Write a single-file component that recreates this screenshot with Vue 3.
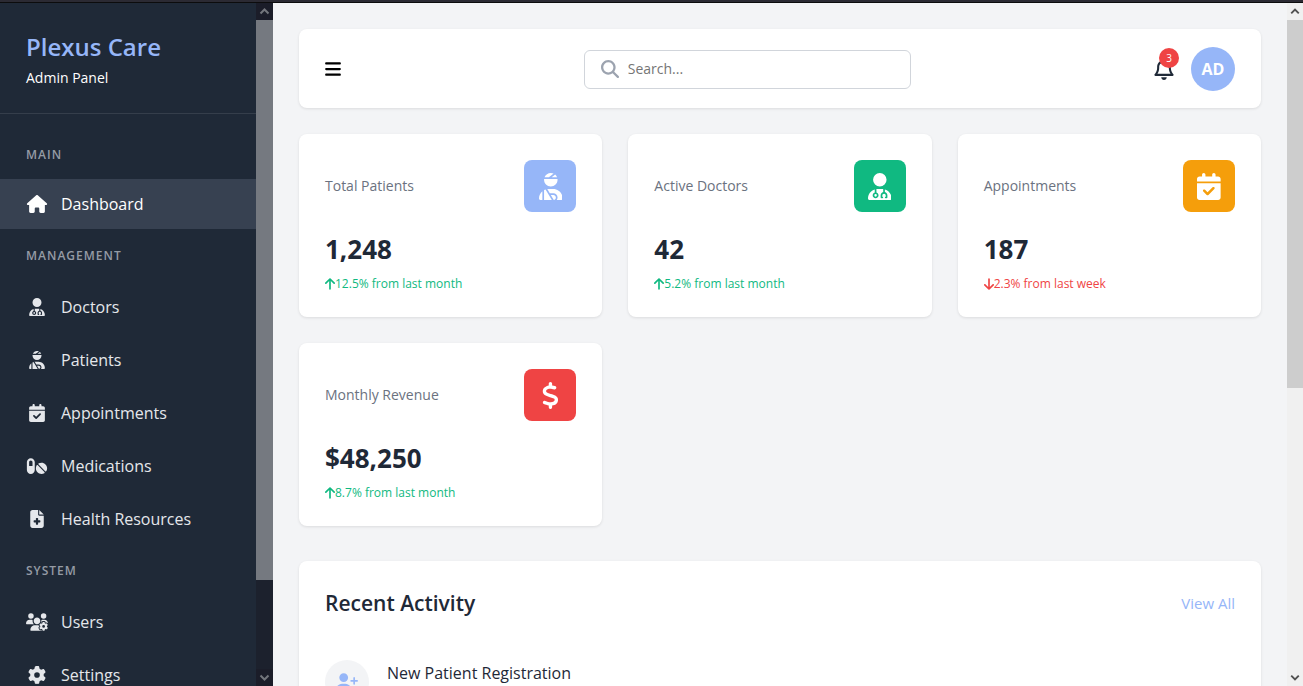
<script setup>
import { ref } from 'vue'

const icons = {
  house: { w: 576, d: 'M575.8 255.5c0 18-15 32.1-32 32.1l-32 0 .7 160.2c0 2.7-.2 5.4-.5 8.1l0 16.2c0 22.1-17.9 40-40 40l-16 0c-1.1 0-2.2 0-3.3-.1c-1.4 .1-2.8 .1-4.2 .1L416 512l-24 0c-22.1 0-40-17.9-40-40l0-24 0-64c0-17.7-14.3-32-32-32l-64 0c-17.7 0-32 14.3-32 32l0 64 0 24c0 22.1-17.9 40-40 40l-24 0-31.9 0c-1.5 0-3-.1-4.5-.2c-1.2 .1-2.4 .2-3.6 .2l-16 0c-22.1 0-40-17.9-40-40l0-112c0-.9 0-1.9 .1-2.8l0-69.7-32 0c-18 0-32-14-32-32.1c0-9 3-17 10-24L266.4 8c7-7 15-8 22-8s15 2 21 7L564.8 231.5c8 7 12 15 11 24z' },
  doctor: { w: 448, d: 'M224 256A128 128 0 1 0 224 0a128 128 0 1 0 0 256zm-96 55.2C54 332.9 0 401.3 0 482.3C0 498.7 13.3 512 29.7 512l388.6 0c16.4 0 29.7-13.3 29.7-29.7c0-81-54-149.4-128-171.1l0 50.8c27.6 7.1 48 32.2 48 62l0 40c0 8.8-7.2 16-16 16l-16 0c-8.8 0-16-7.2-16-16s7.2-16 16-16l0-24c0-17.7-14.3-32-32-32s-32 14.3-32 32l0 24c8.8 0 16 7.2 16 16s-7.2 16-16 16l-16 0c-8.8 0-16-7.2-16-16l0-40c0-29.8 20.4-54.9 48-62l0-57.1c-6-.6-12.1-.9-18.3-.9l-91.4 0c-6.2 0-12.3 .3-18.3 .9l0 65.4c23.1 6.9 40 28.3 40 53.7c0 30.9-25.1 56-56 56s-56-25.1-56-56c0-25.4 16.9-46.8 40-53.7l0-59.1zM144 448a24 24 0 1 0 0-48 24 24 0 1 0 0 48z' },
  patient: { w: 448, d: 'M240 80l102.7 0c-7.9-19.5-20.4-36.5-36.2-49.9L240 80zm37.7-68.2C261.3 4.2 243.2 0 224 0c-53.7 0-99.7 33.1-118.7 80l81.4 0 91-68.2zM224 256c70.7 0 128-57.3 128-128c0-5.4-.3-10.8-1-16L97 112c-.7 5.2-1 10.6-1 16c0 70.7 57.3 128 128 128zM124 312.4c-9.7 3.1-19.1 7-28 11.7L96 512l147.7 0L181.5 408.2 124 312.4zm33-7.2L204.3 384l67.7 0c44.2 0 80 35.8 80 80c0 18-6 34.6-16 48l82.3 0c16.4 0 29.7-13.3 29.7-29.7C448 383.8 368.2 304 269.7 304l-91.4 0c-7.2 0-14.3 .4-21.3 1.3zM0 482.3C0 498.7 13.3 512 29.7 512L64 512l0-166.6C24.9 378.1 0 427.3 0 482.3zM320 464c0-26.5-21.5-48-48-48l-48.5 0 57.1 95.2C303 507.2 320 487.6 320 464z' },
  calendar: { w: 448, d: 'M128 0c17.7 0 32 14.3 32 32l0 32 128 0 0-32c0-17.7 14.3-32 32-32s32 14.3 32 32l0 32 48 0c26.5 0 48 21.5 48 48l0 48L0 160l0-48C0 85.5 21.5 64 48 64l48 0 0-32c0-17.7 14.3-32 32-32zM0 192l448 0 0 272c0 26.5-21.5 48-48 48L48 512c-26.5 0-48-21.5-48-48L0 192zM329 305c9.4-9.4 9.4-24.6 0-33.9s-24.6-9.4-33.9 0l-95 95-47-47c-9.4-9.4-24.6-9.4-33.9 0s-9.4 24.6 0 33.9l64 64c9.4 9.4 24.6 9.4 33.9 0L329 305z' },
  pills: { w: 576, d: 'M112 96c-26.5 0-48 21.5-48 48l0 112 96 0 0-112c0-26.5-21.5-48-48-48zM0 144C0 82.1 50.1 32 112 32s112 50.1 112 112l0 224c0 61.9-50.1 112-112 112S0 429.9 0 368L0 144zM554.9 399.4c-7.1 12.3-23.7 13.1-33.8 3.1L333.5 214.9c-10-10-9.3-26.7 3.1-33.8C360 167.7 387.1 160 416 160c88.4 0 160 71.6 160 160c0 28.9-7.7 56-21.1 79.4zm-59.5 59.5C472 472.3 444.9 480 416 480c-88.4 0-160-71.6-160-160c0-28.9 7.7-56 21.1-79.4c7.1-12.3 23.7-13.1 33.8-3.1L498.5 425.1c10 10 9.3 26.7-3.1 33.8z' },
  file: { w: 384, d: 'M64 0C28.7 0 0 28.7 0 64L0 448c0 35.3 28.7 64 64 64l256 0c35.3 0 64-28.7 64-64l0-288-128 0c-17.7 0-32-14.3-32-32L224 0 64 0zM256 0l0 128 128 0L256 0zM160 240c0-8.8 7.2-16 16-16l32 0c8.8 0 16 7.2 16 16l0 48 48 0c8.8 0 16 7.2 16 16l0 32c0 8.8-7.2 16-16 16l-48 0 0 48c0 8.8-7.2 16-16 16l-32 0c-8.8 0-16-7.2-16-16l0-48-48 0c-8.8 0-16-7.2-16-16l0-32c0-8.8 7.2-16 16-16l48 0 0-48z' },
  users: { w: 640, d: 'M144 160A80 80 0 1 0 144 0a80 80 0 1 0 0 160zm368 0A80 80 0 1 0 512 0a80 80 0 1 0 0 160zM0 298.7C0 310.4 9.6 320 21.3 320l213.3 0c.2 0 .4 0 .7 0c-26.6-23.5-43.3-57.8-43.3-96c0-7.6 .7-15 1.9-22.3c-13.6-6.3-28.7-9.7-44.6-9.7l-42.7 0C47.8 192 0 239.8 0 298.7zM320 320c24 0 45.9-8.8 62.7-23.3c2.5-3.7 5.2-7.3 8-10.7c2.7-3.3 5.7-6.1 9-8.3C410 262.3 416 243.9 416 224c0-53-43-96-96-96s-96 43-96 96s43 96 96 96zm65.4 60.2c-10.3-5.9-18.1-16.2-20.8-28.2l-103.2 0C187.7 352 128 411.7 128 485.3c0 14.7 11.9 26.7 26.7 26.7l300.6 0c-2.1-5.2-3.2-10.9-3.2-16.4l0-3c-1.3-.7-2.7-1.5-4-2.3l-2.6 1.5c-16.8 9.7-40.5 8-54.7-9.7c-4.5-5.6-8.6-11.5-12.4-17.6l-.1-.2-.1-.2-2.4-4.1-.1-.2-.1-.2c-3.4-6.2-6.4-12.6-9-19.3c-8.2-21.2 2.2-42.6 19-52.3l2.7-1.5c0-.8 0-1.5 0-2.3s0-1.5 0-2.3l-2.7-1.5zM533.3 192l-42.7 0c-15.9 0-31 3.5-44.6 9.7c1.3 7.2 1.9 14.7 1.9 22.3c0 17.4-3.5 33.9-9.7 49c2.5 .9 4.9 2 7.1 3.3l2.6 1.5c1.3-.8 2.6-1.6 4-2.3l0-3c0-19.4 13.3-39.1 35.8-42.6c7.9-1.2 16-1.9 24.2-1.9s16.3 .6 24.2 1.9c22.5 3.5 35.8 23.2 35.8 42.6l0 3c1.3 .7 2.7 1.5 4 2.3l2.6-1.5c16.8-9.7 40.5-8 54.7 9.7c2.3 2.8 4.5 5.8 6.6 8.7c-2.1-57.1-49-102.7-106.6-102.7zm91.3 163.9c6.3-3.6 9.5-11.1 6.8-18c-2.1-5.5-4.6-10.8-7.4-15.9l-2.3-4c-3.1-5.1-6.5-9.9-10.2-14.5c-4.6-5.7-12.7-6.7-19-3l-2.9 1.7c-9.2 5.3-20.4 4-29.6-1.3s-16.1-14.5-16.1-25.1l0-3.4c0-7.3-4.9-13.8-12.1-14.9c-6.5-1-13.1-1.5-19.9-1.5s-13.4 .5-19.9 1.5c-7.2 1.1-12.1 7.6-12.1 14.9l0 3.4c0 10.6-6.9 19.8-16.1 25.1s-20.4 6.6-29.6 1.3l-2.9-1.7c-6.3-3.6-14.4-2.6-19 3c-3.7 4.6-7.1 9.5-10.2 14.6l-2.3 3.9c-2.8 5.1-5.3 10.4-7.4 15.9c-2.6 6.8 .5 14.3 6.8 17.9l2.9 1.7c9.2 5.3 13.7 15.8 13.7 26.4s-4.5 21.1-13.7 26.4l-3 1.7c-6.3 3.6-9.5 11.1-6.8 17.9c2.1 5.5 4.6 10.7 7.4 15.8l2.4 4.1c3 5.1 6.4 9.9 10.1 14.5c4.6 5.7 12.7 6.7 19 3l2.9-1.7c9.2-5.3 20.4-4 29.6 1.3s16.1 14.5 16.1 25.1l0 3.4c0 7.3 4.9 13.8 12.1 14.9c6.5 1 13.1 1.5 19.9 1.5s13.4-.5 19.9-1.5c7.2-1.1 12.1-7.6 12.1-14.9l0-3.4c0-10.6 6.9-19.8 16.1-25.1s20.4-6.6 29.6-1.3l2.9 1.7c6.3 3.6 14.4 2.6 19-3c3.7-4.6 7.1-9.4 10.1-14.5l2.4-4.2c2.8-5.1 5.3-10.3 7.4-15.8c2.6-6.8-.5-14.3-6.8-17.9l-3-1.7c-9.2-5.3-13.7-15.8-13.7-26.4s4.5-21.1 13.7-26.4l3-1.7zM472 384a40 40 0 1 1 80 0 40 40 0 1 1 -80 0z' },
  gear: { w: 512, d: 'M495.9 166.6c3.2 8.7 .5 18.4-6.4 24.6l-43.3 39.4c1.1 8.3 1.7 16.8 1.7 25.4s-.6 17.1-1.7 25.4l43.3 39.4c6.9 6.2 9.6 15.9 6.4 24.6c-4.4 11.9-9.7 23.3-15.8 34.3l-4.7 8.1c-6.6 11-14 21.4-22.1 31.2c-5.9 7.2-15.7 9.6-24.5 6.8l-55.7-17.7c-13.4 10.3-28.2 18.9-44 25.4l-12.5 57.1c-2 9.1-9 16.3-18.2 17.8c-13.8 2.3-28 3.5-42.5 3.5s-28.7-1.2-42.5-3.5c-9.2-1.5-16.2-8.7-18.2-17.8l-12.5-57.1c-15.8-6.5-30.6-15.1-44-25.4L83.1 425.9c-8.8 2.8-18.6 .3-24.5-6.8c-8.1-9.8-15.5-20.2-22.1-31.2l-4.7-8.1c-6.1-11-11.4-22.4-15.8-34.3c-3.2-8.7-.5-18.4 6.4-24.6l43.3-39.4C64.6 273.1 64 264.6 64 256s.6-17.1 1.7-25.4L22.4 191.2c-6.9-6.2-9.6-15.9-6.4-24.6c4.4-11.9 9.7-23.3 15.8-34.3l4.7-8.1c6.6-11 14-21.4 22.1-31.2c5.9-7.2 15.7-9.6 24.5-6.8l55.7 17.7c13.4-10.3 28.2-18.9 44-25.4l12.5-57.1c2-9.1 9-16.3 18.2-17.8C227.3 1.2 241.5 0 256 0s28.7 1.2 42.5 3.5c9.2 1.5 16.2 8.7 18.2 17.8l12.5 57.1c15.8 6.5 30.6 15.1 44 25.4l55.7-17.7c8.8-2.8 18.6-.3 24.5 6.8c8.1 9.8 15.5 20.2 22.1 31.2l4.7 8.1c6.1 11 11.4 22.4 15.8 34.3zM256 336a80 80 0 1 0 0-160 80 80 0 1 0 0 160z' },
  dollar: { w: 320, d: 'M160 0c17.7 0 32 14.3 32 32l0 35.7c1.6 .2 3.1 .4 4.7 .7c.4 .1 .7 .1 1.1 .2l48 8.8c17.4 3.2 28.9 19.9 25.7 37.2s-19.9 28.9-37.2 25.7l-47.5-8.7c-31.3-4.6-58.9-1.5-78.3 6.2s-27.2 18.3-29 28.1c-2 10.7-.5 16.7 1.2 20.4c1.8 3.9 5.5 8.3 12.8 13.2c16.3 10.7 41.3 17.7 73.7 26.3l2.9 .8c28.6 7.6 63.6 16.8 89.6 33.8c14.2 9.3 27.6 21.9 35.9 39.5c8.5 17.9 10.3 37.9 6.4 59.2c-6.9 38-33.1 63.4-65.6 76.7c-13.7 5.6-28.6 9.2-44.4 11l0 33.4c0 17.7-14.3 32-32 32s-32-14.3-32-32l0-34.9c-.4-.1-.9-.1-1.3-.2l-.2 0s0 0 0 0c-24.4-3.8-64.5-14.3-91.5-26.3c-16.1-7.2-23.4-26.1-16.2-42.2s26.1-23.4 42.2-16.2c20.9 9.3 55.3 18.5 75.2 21.6c31.9 4.7 58.2 2 76-5.3c16.9-6.9 24.6-16.9 26.8-28.9c1.9-10.6 .4-16.7-1.3-20.4c-1.9-4-5.6-8.4-13-13.3c-16.4-10.7-41.5-17.7-74-26.3l-2.8-.7s0 0 0 0C119.4 279.3 84.4 270 58.4 253c-14.2-9.3-27.5-22-35.8-39.6c-8.4-17.9-10.1-37.9-6.1-59.2C23.7 116 52.3 91.2 84.8 78.3c13.3-5.3 27.9-8.9 43.2-11L128 32c0-17.7 14.3-32 32-32z' },
  up: { w: 384, d: 'M214.6 41.4c-12.5-12.5-32.8-12.5-45.3 0l-160 160c-12.5 12.5-12.5 32.8 0 45.3s32.8 12.5 45.3 0L160 141.2 160 448c0 17.7 14.3 32 32 32s32-14.3 32-32l0-306.7L329.4 246.6c12.5 12.5 32.8 12.5 45.3 0s12.5-32.8 0-45.3l-160-160z' },
  down: { w: 384, d: 'M169.4 470.6c12.5 12.5 32.8 12.5 45.3 0l160-160c12.5-12.5 12.5-32.8 0-45.3s-32.8-12.5-45.3 0L224 370.8 224 64c0-17.7-14.3-32-32-32s-32 14.3-32 32l0 306.7L54.6 265.4c-12.5-12.5-32.8-12.5-45.3 0s-12.5 32.8 0 45.3l160 160z' },
}

const sections = [
  { title: 'Main', links: [{ label: 'Dashboard', icon: 'house', active: true }] },
  {
    title: 'Management',
    links: [
      { label: 'Doctors', icon: 'doctor' },
      { label: 'Patients', icon: 'patient' },
      { label: 'Appointments', icon: 'calendar' },
      { label: 'Medications', icon: 'pills' },
      { label: 'Health Resources', icon: 'file' },
    ],
  },
  {
    title: 'System',
    links: [
      { label: 'Users', icon: 'users' },
      { label: 'Settings', icon: 'gear' },
    ],
  },
]

const stats = [
  { label: 'Total Patients', value: '1,248', trend: '12.5% from last month', dir: 'up', icon: 'patient', tone: 'blue' },
  { label: 'Active Doctors', value: '42', trend: '5.2% from last month', dir: 'up', icon: 'doctor', tone: 'green' },
  { label: 'Appointments', value: '187', trend: '2.3% from last week', dir: 'down', icon: 'calendar', tone: 'amber' },
  { label: 'Monthly Revenue', value: '$48,250', trend: '8.7% from last month', dir: 'up', icon: 'dollar', tone: 'red' },
]

const query = ref('')
const box = (name) => `0 0 ${icons[name].w} 512`
</script>

<template>
  <div class="page">
    <div class="window-edge"></div>
    <div class="shell">
      <aside class="sidebar">
        <div class="sidebar-body">
          <div class="brand">
            <h2>Plexus Care</h2>
            <p>Admin Panel</p>
          </div>
          <nav class="menu" aria-label="Primary">
            <section v-for="s in sections" :key="s.title" class="menu-section">
              <h3>{{ s.title }}</h3>
              <ul>
                <li v-for="l in s.links" :key="l.label">
                  <a href="#" :class="{ active: l.active }">
                    <svg class="menu-icon" :viewBox="box(l.icon)" aria-hidden="true"><path :d="icons[l.icon].d" /></svg>
                    <span>{{ l.label }}</span>
                  </a>
                </li>
              </ul>
            </section>
          </nav>
        </div>
        <div class="scrollbar dark" aria-hidden="true">
          <div class="arrow"><svg viewBox="0 0 17 17"><path d="M4.500 10.500l4-4 4 4" /></svg></div>
          <div class="track"><div class="thumb" :style="{ height: '86.3%' }"></div></div>
          <div class="arrow"><svg viewBox="0 0 17 17"><path d="M4.500 6.500l4 4 4-4" /></svg></div>
        </div>
      </aside>

      <main class="content">
        <header class="topbar card">
          <button class="toggle" type="button" aria-label="Toggle menu">
            <svg viewBox="0 0 448 512"><path d="M0 96C0 78.300 14.300 64 32 64l384 0c17.700 0 32 14.300 32 32s-14.300 32-32 32L32 128C14.300 128 0 113.700 0 96zM0 256c0-17.700 14.300-32 32-32l384 0c17.700 0 32 14.300 32 32s-14.300 32-32 32L32 288c-17.700 0-32-14.300-32-32zM448 416c0 17.700-14.300 32-32 32L32 448c-17.700 0-32-14.300-32-32s14.300-32 32-32l384 0c17.700 0 32 14.300 32 32z" /></svg>
          </button>
          <label class="search">
            <svg viewBox="0 0 512 512" aria-hidden="true"><path d="M416 208c0 45.900-14.900 88.300-40 122.700L502.600 457.400c12.500 12.500 12.500 32.800 0 45.300s-32.800 12.500-45.300 0L330.700 376c-34.400 25.200-76.800 40-122.700 40C93.100 416 0 322.900 0 208S93.100 0 208 0S416 93.100 416 208zM208 352a144 144 0 1 0 0-288 144 144 0 1 0 0 288z" /></svg>
            <input v-model="query" type="text" placeholder="Search..." aria-label="Search" />
          </label>
          <div class="user-tools">
            <button class="bell" type="button" aria-label="Notifications">
              <svg viewBox="0 0 448 512"><path d="M224 0c-17.700 0-32 14.300-32 32l0 19.200C119 66 64 130.600 64 208l0 25.400c0 45.400-15.500 89.500-43.800 124.900L5.300 377c-5.800 7.200-6.900 17.100-2.900 25.400S14.800 416 24 416l400 0c9.200 0 17.600-5.300 21.600-13.600s2.900-18.200-2.900-25.400l-14.900-18.600C399.500 322.900 384 278.800 384 233.400l0-25.400c0-77.400-55-142-128-156.800L256 32c0-17.700-14.300-32-32-32zm0 96c61.900 0 112 50.100 112 112l0 25.400c0 47.900 13.900 94.600 39.700 134.600L72.300 368C98.100 328 112 281.300 112 233.400l0-25.400c0-61.900 50.100-112 112-112zm64 352l-64 0-64 0c0 17 6.700 33.300 18.700 45.300s28.300 18.700 45.300 18.700s33.300-6.700 45.300-18.700s18.700-28.300 18.700-45.300z" /></svg>
              <span class="badge">3</span>
            </button>
            <div class="avatar">AD</div>
          </div>
        </header>

        <div class="stats">
          <article v-for="s in stats" :key="s.label" class="stat card">
            <div class="stat-head">
              <span class="stat-label">{{ s.label }}</span>
              <div class="stat-icon" :class="s.tone">
                <svg :viewBox="box(s.icon)" aria-hidden="true"><path :d="icons[s.icon].d" /></svg>
              </div>
            </div>
            <div class="stat-value">{{ s.value }}</div>
            <div class="trend" :class="s.dir">
              <svg :viewBox="box(s.dir)" aria-hidden="true"><path :d="icons[s.dir].d" /></svg>
              <span>{{ s.trend }}</span>
            </div>
          </article>
        </div>

        <section class="activity card">
          <div class="activity-head">
            <h2>Recent Activity</h2>
            <a href="#">View All</a>
          </div>
          <ul class="activity-list">
            <li>
              <div class="activity-icon">
                <svg viewBox="0 0 640 512" aria-hidden="true"><path d="M96 128a128 128 0 1 1 256 0A128 128 0 1 1 96 128zM0 482.300C0 383.800 79.800 304 178.300 304l91.400 0C368.200 304 448 383.800 448 482.300c0 16.400-13.300 29.700-29.700 29.700L29.700 512C13.300 512 0 498.700 0 482.300zM504 312l0-64-64 0c-13.300 0-24-10.700-24-24s10.700-24 24-24l64 0 0-64c0-13.300 10.700-24 24-24s24 10.700 24 24l0 64 64 0c13.300 0 24 10.700 24 24s-10.700 24-24 24l-64 0 0 64c0 13.300-10.700 24-24 24s-24-10.700-24-24z" /></svg>
              </div>
              <h4>New Patient Registration</h4>
            </li>
          </ul>
        </section>
      </main>

      <div class="scrollbar light" aria-hidden="true">
        <div class="arrow"><svg viewBox="0 0 17 17"><path d="M4.500 10.500l4-4 4 4" /></svg></div>
        <div class="track"><div class="thumb" :style="{ height: '56.7%' }"></div></div>
        <div class="arrow"><svg viewBox="0 0 17 17"><path d="M4.500 6.500l4 4 4-4" /></svg></div>
      </div>
    </div>
  </div>
</template>

<style>
body {
  margin: 0;
  overflow: hidden;
}
</style>

<style scoped>
* {
  box-sizing: border-box;
}

h2, h3, h4, p, ul {
  margin: 0;
  padding: 0;
}

ul {
  list-style: none;
}

a {
  text-decoration: none;
}

button {
  border: 0;
  padding: 0;
  background: none;
  cursor: pointer;
}

svg {
  display: block;
  fill: currentColor;
}

.page {
  display: flex;
  flex-direction: column;
  height: 100vh;
  overflow: hidden;
  background: #f3f4f6;
  color: #1f2937;
  font-family: "Segoe UI", "Open Sans", "Noto Sans", sans-serif;
}

.window-edge {
  flex: none;
  height: 3px;
  background: #2b2a33;
  border-bottom: 1px solid #0c0c0d;
}

.shell {
  flex: 1;
  display: flex;
  min-height: 0;
}

.sidebar {
  flex: none;
  display: flex;
  width: 273px;
  background: #1f2937;
  color: #fff;
}

.sidebar-body {
  flex: 1;
  overflow: hidden;
}

.brand {
  padding: 27px 26px 25px;
  border-bottom: 1px solid #353e4b;
}

.brand h2 {
  font-size: 24px;
  line-height: 34px;
  font-weight: 600;
  color: #96b6f8;
}

.brand p {
  margin-top: 4px;
  font-size: 14px;
  line-height: 20px;
}

.menu {
  padding-top: 14px;
}

.menu-section h3 {
  padding: 18px 26px 17px;
  font-size: 12px;
  line-height: 18px;
  font-weight: 600;
  letter-spacing: 1px;
  text-transform: uppercase;
  color: #959ba5;
}

.menu-section:first-child h3 {
  padding-bottom: 15px;
}

.menu-section ul {
  display: flex;
  flex-direction: column;
  gap: 3px;
}

.menu-section a {
  display: flex;
  align-items: center;
  gap: 13px;
  height: 50px;
  padding: 0 26px;
  font-size: 16px;
  line-height: 26px;
  color: #e5e7eb;
}

.menu-section a.active {
  background: #374151;
  color: #fff;
}

.menu-icon {
  width: 22px;
  height: 18px;
}

.scrollbar {
  flex: none;
  display: flex;
  flex-direction: column;
  width: 17px;
}

.scrollbar .arrow {
  flex: none;
  height: 17px;
}

.scrollbar .arrow svg {
  width: 100%;
  height: 17px;
}

.scrollbar .arrow path {
  fill: none;
  stroke: currentColor;
  stroke-width: 2;
}

.scrollbar .track {
  flex: 1;
}

.scrollbar.dark {
  background: #1c212d;
  color: #73767c;
}

.scrollbar.dark .arrow {
  background: #1b1d29;
}

.scrollbar.dark .thumb {
  background: #757980;
}

.scrollbar.light {
  width: 16px;
  background: #f0f0f0;
  color: #505050;
}

.scrollbar.light .thumb {
  background: #cdcdcd;
}

.content {
  flex: 1;
  min-width: 0;
  padding: 26px 26px 0;
  overflow: hidden;
}

.card {
  background: #fff;
  border-radius: 8px;
  box-shadow: 0 1px 3px rgba(0, 0, 0, 0.1);
}

.topbar {
  display: flex;
  align-items: center;
  justify-content: space-between;
  padding: 18px 26px 17px;
}

.toggle {
  color: #000;
}

.toggle svg {
  width: 16px;
  height: 18px;
}

.search {
  display: flex;
  align-items: center;
  gap: 9px;
  width: 36%;
  height: 39px;
  padding: 0 16px;
  border: 1px solid #d1d5db;
  border-radius: 6px;
}

.search svg {
  flex: none;
  width: 18px;
  height: 18px;
  color: #9ca3af;
}

.search input {
  flex: 1;
  min-width: 0;
  border: 0;
  padding: 0;
  outline: 0;
  background: transparent;
  font-family: inherit;
  font-size: 14px;
  line-height: 20px;
  color: #1f2937;
}

.search input::placeholder {
  color: #757575;
  opacity: 1;
}

.user-tools {
  display: flex;
  align-items: center;
  gap: 17px;
}

.bell {
  position: relative;
  color: #1f2937;
}

.bell svg {
  width: 20px;
  height: 22px;
}

.badge {
  position: absolute;
  top: -10px;
  right: -5px;
  width: 20px;
  height: 20px;
  border-radius: 50%;
  background: #ef4444;
  color: #fff;
  font-family: "Segoe UI", "Open Sans", "Noto Sans", sans-serif;
  font-size: 10px;
  line-height: 20px;
  text-align: center;
}

.avatar {
  width: 44px;
  height: 44px;
  border-radius: 50%;
  background: #96b6f8;
  color: #fff;
  font-size: 16px;
  line-height: 44px;
  font-weight: 700;
  text-align: center;
}

.stats {
  display: grid;
  grid-template-columns: repeat(3, 1fr);
  gap: 26px;
  margin-top: 26px;
}

.stat {
  padding: 26px 26px 23px;
}

.stat-head {
  display: flex;
  align-items: center;
  justify-content: space-between;
}

.stat-label {
  font-size: 14px;
  line-height: 22px;
  color: #6b7280;
}

.stat-icon {
  display: grid;
  place-items: center;
  width: 52px;
  height: 52px;
  border-radius: 8px;
  color: #fff;
}

.stat-icon svg {
  height: 27px;
}

.blue {
  background: #96b6f8;
}

.green {
  background: #10b981;
}

.amber {
  background: #f59e0b;
}

.red {
  background: #ef4444;
}

.stat-value {
  margin-top: 19px;
  font-size: 26px;
  line-height: 36px;
  font-weight: 700;
}

.trend {
  display: flex;
  align-items: center;
  margin-top: 6px;
  font-size: 12px;
  line-height: 21px;
}

.trend svg {
  width: 10px;
  height: 14px;
}

.trend.up {
  color: #10b981;
}

.trend.down {
  color: #ef4444;
}

.activity {
  margin-top: 35px;
  padding: 26px;
}

.activity-head {
  display: flex;
  align-items: center;
  justify-content: space-between;
}

.activity-head h2 {
  font-size: 21px;
  line-height: 32px;
  font-weight: 600;
}

.activity-head a {
  font-size: 15px;
  line-height: 22px;
  color: #96b6f8;
}

.activity-list {
  margin-top: 41px;
}

.activity-list li {
  display: flex;
  align-items: flex-start;
  gap: 18px;
}

.activity-icon {
  display: grid;
  place-items: center;
  width: 44px;
  height: 44px;
  border-radius: 50%;
  background: #f3f4f6;
  color: #96b6f8;
}

.activity-icon svg {
  width: 22px;
  height: 18px;
}

.activity-list h4 {
  font-size: 16px;
  line-height: 26px;
  font-weight: 400;
}
</style>
